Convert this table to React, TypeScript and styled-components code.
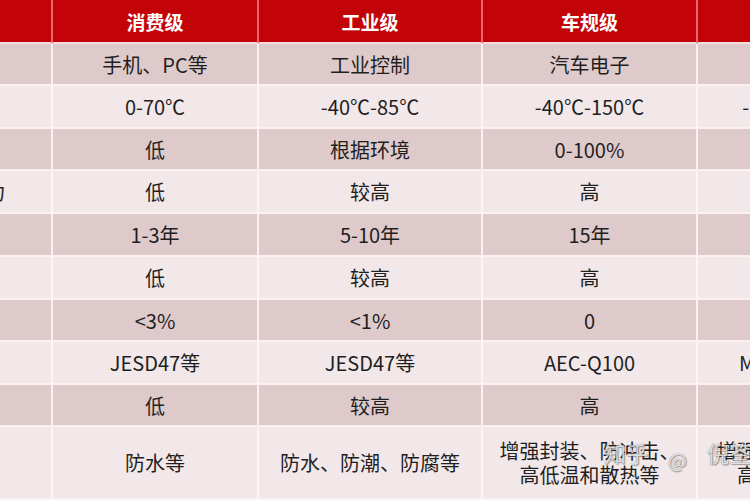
import React from "react"
import styled, { createGlobalStyle } from "styled-components"

const GlobalStyle = createGlobalStyle`
  html, body {
    margin: 0;
    padding: 0;
    background: #f2e7e9;
    overflow: hidden;
  }
  body {
    width: 750px;
    height: 500px;
  }
`

const Page = styled.div`
  position: relative;
  width: 750px;
  height: 500px;
  overflow: hidden;
  font-family: "Noto Sans CJK SC", "Noto Sans", sans-serif;
`

// the shot is a crop of a wider table: first and last columns are cut by the window
const Table = styled.div<{ $rows: string }>`
  display: grid;
  grid-template-columns: 193px 206px 224px 215px 200px;
  grid-template-rows: ${(p) => p.$rows};
  margin-left: -140px;
  width: 1038px;
`

type Tone = "head" | "dark" | "light"

const tones = {
  head: { bg: "#c20409", line: "#e9686b", bottom: "#f3dcdc", color: "#ffffff" },
  dark: { bg: "#dfcacb", line: "#fbf1f1", bottom: "#fbf1f1", color: "#1f1f1f" },
  light: { bg: "#f2e7e9", line: "#fdf6f6", bottom: "#fbf1f1", color: "#1f1f1f" },
}

const Cell = styled.div<{ $tone: Tone }>`
  box-sizing: border-box;
  display: flex;
  align-items: center;
  justify-content: center;
  text-align: center;
  white-space: nowrap;
  background: ${(p) => tones[p.$tone].bg};
  color: ${(p) => tones[p.$tone].color};
  border-right: 2px solid ${(p) => tones[p.$tone].line};
  border-bottom: 2px solid ${(p) => tones[p.$tone].bottom};
  font-size: ${(p) => (p.$tone === "head" ? "19px" : "20px")};
  font-weight: ${(p) => (p.$tone === "head" ? 700 : 400)};
  line-height: 24px;
  padding-top: 1px;
`

const Watermark = styled.div`
  position: absolute;
  left: 604px;
  top: 438px;
  display: flex;
  align-items: baseline;
  gap: 20px;
  font-size: 22px;
  line-height: 28px;
  color: rgba(255, 255, 255, 0.78);
  text-shadow: 0 0 1px rgba(50, 50, 50, 0.7), 1px 1px 1px rgba(80, 80, 80, 0.45);
  white-space: nowrap;
  pointer-events: none;
`

const At = styled.span`
  font-size: 20px;
  position: relative;
  top: 6px;
`

const header = ["项目", "消费级", "工业级", "车规级", "军工级"]

const rows: { h: number; cells: React.ReactNode[] }[] = [
  { h: 42, cells: ["应用领域", "手机、PC等", "工业控制", "汽车电子", "航空航天"] },
  { h: 43, cells: ["工作温度", "0-70℃", "-40℃-85℃", "-40℃-150℃", "-55℃-125℃"] },
  { h: 42, cells: ["湿度", "低", "根据环境", "0-100%", "0-100%"] },
  { h: 43, cells: ["抗振动能力", "低", "较高", "高", "极高"] },
  { h: 43, cells: ["使用寿命", "1-3年", "5-10年", "15年", "15年以上"] },
  { h: 43, cells: ["可靠性", "低", "较高", "高", "极高"] },
  { h: 42, cells: ["失效率", "<3%", "<1%", "0", "0"] },
  { h: 43, cells: ["认证标准", "JESD47等", "JESD47等", "AEC-Q100", "MIL-STD-883"] },
  { h: 42, cells: ["成本", "低", "较高", "高", "极高"] },
  {
    h: 73,
    cells: [
      "防护",
      "防水等",
      "防水、防潮、防腐等",
      <>增强封装、防冲击、<br />高低温和散热等</>,
      <>增强封装、抗辐射<br />高低温散热等</>,
    ],
  },
]

export default function App() {
  const template = [44, ...rows.map((r) => r.h)].map((h) => `${h}px`).join(" ")

  return (
    <Page>
      <GlobalStyle />
      <Table $rows={template}>
        {header.map((h) => (
          <Cell key={h} $tone="head">{h}</Cell>
        ))}
        {rows.map((row, i) =>
          row.cells.map((c, j) => (
            <Cell key={`${i}-${j}`} $tone={i % 2 === 0 ? "dark" : "light"}>
              {c}
            </Cell>
          ))
        )}
      </Table>
      <Watermark>
        <span>知乎</span>
        <At>@</At>
        <span>倪筌</span>
      </Watermark>
    </Page>
  )
}
